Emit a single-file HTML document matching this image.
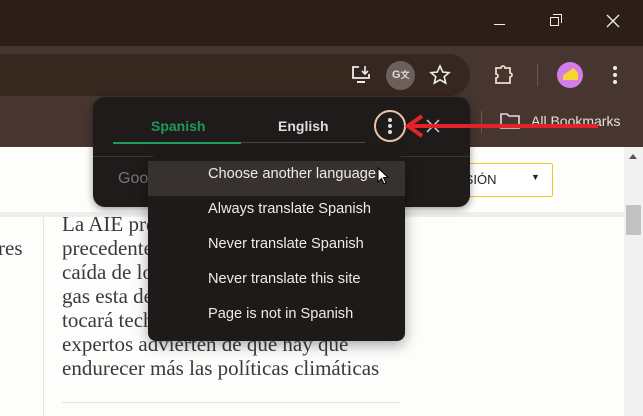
<!DOCTYPE html>
<html><head><style>
*{margin:0;padding:0;box-sizing:border-box}
body{width:643px;height:416px;overflow:hidden;position:relative;background:#fdfdfb;font-family:"Liberation Sans",sans-serif}
.abs{position:absolute}
.serif{font-family:"Liberation Serif",serif;font-size:21px;color:#3a3a3a}
.mi{position:absolute;left:208px;font-size:14.6px;color:#f0ebe8}
</style></head><body>
<div class="abs" style="left:0;top:0;width:643px;height:46px;background:#2d1f18"></div>
<div class="abs" style="left:0;top:46px;width:643px;height:101px;background:#46362f"></div>
<div class="abs" style="left:-20px;top:54px;width:490px;height:42px;background:#36271f;border-radius:21px"></div>
<div class="abs" style="left:494px;top:24px;width:11px;height:1px;background:#eee"></div>
<div class="abs" style="left:550px;top:17px;width:9px;height:9px;border:1px solid #eee"></div>
<div class="abs" style="left:553px;top:14px;width:9px;height:9px;border-top:1px solid #eee;border-right:1px solid #eee"></div>
<svg class="abs" style="left:606px;top:14px" width="14" height="14"><path d="M1 1L13 13M13 1L1 13" stroke="#eee" stroke-width="1.3"/></svg>
<svg class="abs" style="left:350px;top:64px" width="22" height="22"><path d="M9 3H3v11h16v-4" stroke="#eee" stroke-width="1.8" fill="none"/><path d="M15 2v8M12 7l3 3 3-3" stroke="#eee" stroke-width="1.6" fill="none"/><path d="M7 18h8" stroke="#eee" stroke-width="2"/></svg>
<div class="abs" style="left:386px;top:61px;width:29px;height:29px;border-radius:50%;background:#6d605a"></div>
<div class="abs" style="left:392px;top:68px;font-size:11px;font-weight:bold;color:#ddd">G<span style="font-size:9px">文</span></div>
<svg class="abs" style="left:429px;top:64px" width="22" height="22"><path d="M11 2l2.7 6 6.3.6-4.8 4.2 1.5 6.3L11 15.8 5.3 19.1l1.5-6.3L2 8.6l6.3-.6z" stroke="#eee" stroke-width="1.6" fill="none"/></svg>
<svg class="abs" style="left:492px;top:63px" width="24" height="24"><path d="M4 5h5a2 2 0 0 1 4 0h5v5a2 2 0 0 1 0 4v6H4v-5a2 2 0 0 0 0-4z" stroke="#f0d8c8" stroke-width="1.8" fill="none"/></svg>
<div class="abs" style="left:537px;top:64px;width:1px;height:22px;background:#6a5a52"></div>
<div class="abs" style="left:557px;top:62px;width:26px;height:26px;border-radius:50%;background:#d67ce8"></div>
<div class="abs" style="left:563px;top:68px;width:15px;height:12px;background:#f7d531;clip-path:polygon(0 60%,70% 0,100% 40%,100% 100%,0 100%)"></div>
<div class="abs" style="left:613px;top:66px;width:4px;height:4px;border-radius:50%;background:#eee;box-shadow:0 7px 0 #eee,0 14px 0 #eee"></div>
<div class="abs" style="left:481px;top:111px;width:1px;height:22px;background:#6a5a52"></div>
<svg class="abs" style="left:499px;top:112px" width="22" height="18"><path d="M2 2h6l2 2h10v12H2z" stroke="#ddd" stroke-width="1.6" fill="none"/></svg>
<div class="abs" style="left:531px;top:113px;font-size:14px;color:#e8e0dc">All Bookmarks</div>
<div class="abs" style="left:0;top:147px;width:624px;height:269px;background:#fdfdfb"></div>
<div class="abs" style="left:0;top:212px;width:624px;height:5px;background:#eeeeec"></div>
<div class="abs" style="left:43px;top:217px;width:1px;height:199px;background:#e6e6e4"></div>
<div class="abs" style="left:62px;top:402px;width:338px;height:1px;background:#e4e4e2"></div>
<div class="abs" style="left:440px;top:163px;width:113px;height:34px;border:1.5px solid #ecc92c;border-radius:2px;background:#fff"></div>
<div class="abs" style="left:456px;top:172px;font-size:13px;color:#222">ESIÓN</div>
<div class="abs" style="left:531px;top:172px;font-size:9px;color:#222">▼</div>
<div class="abs serif" style="left:-2px;top:236px">res</div>
<div class="abs serif" style="left:62px;top:212px;line-height:24px;width:360px;white-space:nowrap">La AIE prevé un ritmo sin<br>precedentes en la<br>caída de los combustibles<br>gas esta década y que<br>tocará techo pronto. Los<br>expertos advierten de que hay que<br>endurecer más las políticas climáticas</div>
<div class="abs" style="left:624px;top:147px;width:19px;height:269px;background:#f1f1f1"></div>
<div class="abs" style="left:629px;top:154px;width:0;height:0;border-left:4px solid transparent;border-right:4px solid transparent;border-bottom:5px solid #555"></div>
<div class="abs" style="left:626px;top:205px;width:15px;height:30px;background:#c1c1c1"></div>
<div class="abs" style="left:93px;top:97px;width:377px;height:110px;background:#1f1b1a;border-radius:12px;box-shadow:0 2px 8px rgba(0,0,0,.4)"></div>
<div class="abs" style="left:93px;top:156px;width:377px;height:1px;background:#3a3634"></div>
<div class="abs" style="left:151px;top:118px;font-size:14px;font-weight:bold;color:#1d9a5c">Spanish</div>
<div class="abs" style="left:278px;top:118px;font-size:14px;font-weight:bold;color:#ddd">English</div>
<div class="abs" style="left:113px;top:142px;width:128px;height:2px;background:#1d9a5c"></div>
<div class="abs" style="left:241px;top:142px;width:124px;height:1px;background:#4a4542"></div>
<div class="abs" style="left:118px;top:170px;font-size:16px;color:#777">Goo</div>
<div class="abs" style="left:374px;top:110px;width:32px;height:32px;border-radius:50%;border:2px solid #e8c4ad"></div>
<div class="abs" style="left:388px;top:118px;width:4px;height:4px;border-radius:50%;background:#ddd;box-shadow:0 6px 0 #ddd,0 12px 0 #ddd"></div>
<svg class="abs" style="left:426px;top:119px" width="14" height="14"><path d="M1 1L13 13M13 1L1 13" stroke="#ccc" stroke-width="1.5"/></svg>
<svg class="abs" style="left:400px;top:112px" width="200" height="28"><path d="M10 14H198" stroke="#e3232a" stroke-width="4"/><path d="M22 4L8 14 22 24" stroke="#e3232a" stroke-width="4" fill="none"/></svg>
<div class="abs" style="left:148px;top:156px;width:257px;height:185px;background:#1e1a19;border-radius:8px;box-shadow:0 4px 14px rgba(0,0,0,.35);overflow:hidden">
<div style="margin-top:5px;height:35px;background:#373230"></div></div>
<div class="mi" style="top:166px">Choose another language</div>
<div class="mi" style="top:201px">Always translate Spanish</div>
<div class="mi" style="top:236px">Never translate Spanish</div>
<div class="mi" style="top:271px">Never translate this site</div>
<div class="mi" style="top:306px">Page is not in Spanish</div>
<svg class="abs" style="left:377px;top:167px" width="12" height="18"><path d="M1 1v14l3.5-3.5 2.5 5.5 2-1-2.5-5.5H11z" fill="#fff" stroke="#000"/></svg>
</body></html>
